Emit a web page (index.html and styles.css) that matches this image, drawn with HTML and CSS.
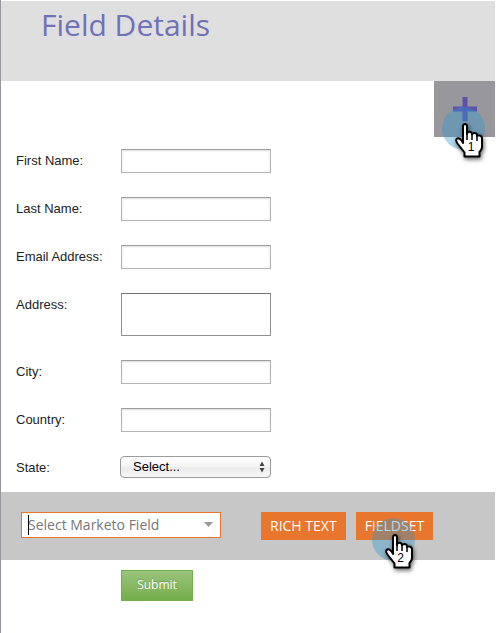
FILE: index.html
```html
<!DOCTYPE html>
<html lang="en">
<head>
<meta charset="utf-8">
<meta name="viewport" content="width=device-width, initial-scale=1">
<title>Field Details</title>
<link rel="stylesheet" href="styles.css">
</head>
<body>
<svg class="defs" aria-hidden="true">
  <symbol id="hand" viewBox="0 0 32 40">
    <path d="M10 20V5.500Q10 3 12 3T14 5.500V13V12.500Q14.500 10.800 16.500 10.800T19 13V13.500Q19.500 12 21.500 12T24 14V15Q24.500 14.300 26.500 14.500T29 17V26Q29 28.500 26.500 31V35.500H11.500V31.500L4.500 22.500Q2.500 19.500 3.500 18Q5 16.500 7 18Q9 19.500 10 22Z" fill="#fff" stroke="#000" stroke-width="2" stroke-linejoin="round"/>
    <path d="M10 17V22M14 12V19M19 13V19M24 14V20" fill="none" stroke="#000" stroke-width="1.500"/>
  </symbol>
</svg>
<main class="page">
  <header class="header"><h1>Field Details</h1></header>
  <form class="form">
    <div class="fields">
      <div class="row"><label for="first">First Name:</label><input id="first" type="text"></div>
      <div class="row"><label for="last">Last Name:</label><input id="last" type="text"></div>
      <div class="row"><label for="email">Email Address:</label><input id="email" type="email"></div>
      <div class="row"><label for="address">Address:</label><textarea id="address"></textarea></div>
      <div class="row"><label for="city">City:</label><input id="city" type="text"></div>
      <div class="row"><label for="country">Country:</label><input id="country" type="text"></div>
      <div class="row"><label for="state">State:</label>
        <div class="select">
          <select id="state"><option>Select...</option></select>
          <svg class="updown" viewBox="0 0 6 12" aria-hidden="true"><path d="M3 0.500L5.500 5H0.500ZM3 11.500L0.500 7H5.500Z" fill="#444"/></svg>
        </div>
      </div>
      <button class="add" type="button" aria-label="Add">
        <svg class="plus" viewBox="0 0 24 24" aria-hidden="true"><path d="M9.500 0H14.500V9.500H24V14.500H14.500V24H9.500V14.500H0V9.500H9.500Z" fill="#5d51aa"/></svg>
        <span class="pointer"><svg class="hand" aria-hidden="true"><use href="#hand"/></svg><span class="step">1</span></span>
      </button>
    </div>
    <div class="toolbar">
      <div class="combo">
        <input type="text" placeholder="Select Marketo Field" aria-label="Select Marketo Field">
        <span class="caret"></span>
        <svg class="down" viewBox="0 0 9 5" aria-hidden="true"><path d="M0 0H9L4.500 5Z" fill="#999"/></svg>
      </div>
      <button class="action" type="button">RICH TEXT</button>
      <button class="action" type="button">FIELDSET<span class="pointer"><svg class="hand" aria-hidden="true"><use href="#hand"/></svg><span class="step">2</span></span></button>
    </div>
    <div class="footer"><button class="submit" type="submit">Submit</button></div>
  </form>
</main>
</body>
</html>
```
FILE: styles.css
```css
* { box-sizing: border-box; }

body {
  margin: 0;
  background: #fff;
  color: #222;
  font: 13px/16px "Liberation Sans", Arial, sans-serif;
}

input, textarea, select, button { font: inherit; margin: 0; }

.defs { position: absolute; width: 0; height: 0; }

.page {
  min-height: 100vh;
  border-left: 1px solid #98979c;
  padding: 1px 1px 0 0;
}

.header {
  height: 80px;
  padding: 4px 40px;
  background: #dfdfdf;
}

.header h1 {
  margin: 0;
  color: #7071b9;
  font: 400 30px/40px "Open Sans", sans-serif;
}

.fields {
  position: relative;
  display: flex;
  flex-direction: column;
  gap: 24px;
  padding: 68px 15px 14px;
}

.row {
  display: grid;
  grid-template-columns: 105px 150px;
  align-items: start;
}

.row label { padding-top: 4px; }

.row input, .row textarea {
  display: block;
  width: 100%;
  height: 24px;
  padding: 2px 4px;
  border: 1px solid #b4b4b4;
  border-top-color: #9e9e9e;
  border-radius: 0;
  background: #fff;
  box-shadow: inset 0 1px 2px #ddd;
}

.row textarea {
  height: 43px;
  border-color: #929292;
  border-top-color: #6f6f6f;
  box-shadow: none;
  resize: none;
}

.select { position: relative; margin-left: -1px; }

.select select {
  display: block;
  appearance: none;
  width: 100%;
  height: 22px;
  padding: 0 12px;
  border: 1px solid #9b9b9b;
  border-radius: 4px;
  background: linear-gradient(#fff, #f4f4f4 49%, #ebebeb 50%, #f7f7f7);
  color: #000;
}

.updown {
  position: absolute;
  top: 5px;
  right: 6px;
  width: 6px;
  height: 12px;
}

.add {
  position: absolute;
  top: 0;
  right: 0;
  width: 61px;
  height: 56px;
  padding: 0;
  border: 0;
  background: #98979c;
}

.plus {
  display: block;
  width: 24px;
  height: 24px;
  margin: 0 auto;
}

.pointer {
  position: absolute;
  top: 26px;
  left: 8px;
  width: 43px;
  height: 43px;
  border-radius: 50%;
  background: rgba(42, 151, 208, 0.37);
  pointer-events: none;
}

.hand {
  position: absolute;
  top: 14px;
  left: 11px;
  width: 32px;
  height: 40px;
  filter: drop-shadow(1px 2px 2px rgba(0, 0, 0, 0.6));
}

.step {
  position: absolute;
  top: 32px;
  left: 24px;
  width: 10px;
  color: #000;
  font: 12px/16px "Liberation Sans", Arial, sans-serif;
  text-align: center;
}

.toolbar {
  display: flex;
  align-items: flex-start;
  gap: 10px;
  height: 68px;
  padding: 20px;
  background: #c7c7c7;
}

.combo {
  position: relative;
  width: 200px;
  margin-right: 30px;
}

.combo input {
  display: block;
  width: 100%;
  height: 26px;
  padding: 0 24px 1px 6px;
  border: 1px solid #e8762d;
  border-radius: 0;
  background: #fff;
  font: 14px/20px "Open Sans", sans-serif;
}

.combo input::placeholder { color: #777; opacity: 1; }

.caret {
  position: absolute;
  top: 3px;
  left: 7px;
  width: 1px;
  height: 20px;
  background: #000;
}

.down {
  position: absolute;
  top: 10px;
  right: 8px;
  width: 9px;
  height: 5px;
}

.action {
  position: relative;
  height: 28px;
  padding: 0 9px;
  border: 0;
  background: #e8762d;
  color: #fff;
  font: 14px/28px "Open Sans", sans-serif;
  white-space: nowrap;
}

.action .pointer { top: 6px; left: 16px; }

.footer { padding: 10px 120px; }

.submit {
  width: 72px;
  height: 31px;
  padding: 0 0 1px;
  border: 1px solid #75ae4c;
  background: linear-gradient(#99c47c, #75ae4c);
  color: #fff;
  font: 12px/20px "Open Sans", sans-serif;
  text-shadow: 0 -1px 1px rgba(0, 0, 0, 0.2);
}
```
